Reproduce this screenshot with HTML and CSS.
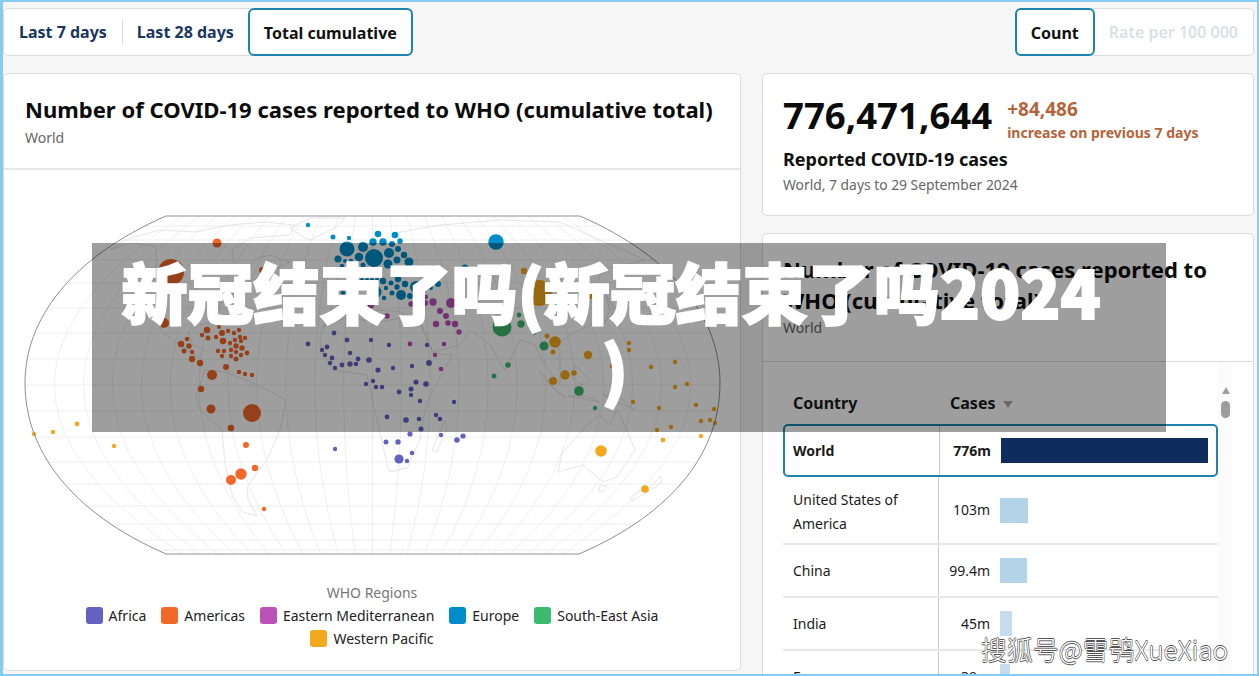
FILE: index.html
```html
<!DOCTYPE html>
<html lang="en">
<head>
<meta charset="utf-8">
<title>新冠结束了吗</title>
<link rel="stylesheet" href="styles.css">
</head>
<body>
<div class="frame">
  <div class="toolbar">
    <div class="seg">
      <span class="seg-item">Last 7 days</span>
      <span class="seg-sep"></span>
      <span class="seg-item">Last 28 days</span>
      <span class="seg-item active">Total cumulative</span>
    </div>
    <div class="seg">
      <span class="seg-item active">Count</span>
      <span class="seg-item disabled">Rate per 100 000</span>
    </div>
  </div>
  <div class="columns">
    <section class="card map-card">
      <header class="card-head">
        <h2>Number of COVID-19 cases reported to WHO (cumulative total)</h2>
        <p>World</p>
      </header>
      <svg class="map" viewBox="4 170 736 404" width="736" height="404">
        <defs><clipPath id="globe"><path d="M166,216 L580,216 C676,258 720,320 720,383 C720,450 676,512 579,554 L166,554 C70,512 25,450 25,383 C25,320 70,258 166,216Z"/></clipPath></defs>
        <g clip-path="url(#globe)" class="grid">
          <path d="M20,226H725M20,240H725M20,260H725M20,283H725M20,308H725M20,333H725M20,359H725M20,385H725M20,411H725M20,437H725M20,462H725M20,484H725M20,506H725M20,524H725M20,540H725M20,550H725"/>
          <path d="M372.5,216V554M389.75,216Q413.1,385 389.75,554M407,216Q453.7,385 407,554M424.25,216Q494.2,385 424.25,554M441.5,216Q534.8,385 441.5,554M458.75,216Q575.4,385 458.75,554M476,216Q616,385 476,554M493.25,216Q656.6,385 493.25,554M510.5,216Q697.1,385 510.5,554M527.75,216Q737.7,385 527.75,554M545,216Q778.3,385 545,554M562.25,216Q818.9,385 562.25,554"/>
          <path d="M355.25,216Q331.9,385 355.25,554M338,216Q291.3,385 338,554M320.75,216Q250.8,385 320.75,554M303.5,216Q210.2,385 303.5,554M286.25,216Q169.6,385 286.25,554M269,216Q129,385 269,554M251.75,216Q88.4,385 251.75,554M234.5,216Q47.9,385 234.5,554M217.25,216Q7.3,385 217.25,554M200,216Q-33.3,385 200,554M182.75,216Q-73.9,385 182.75,554"/>
        </g>
        <g class="land">
          <path d="M110,250L130,243L155,246L157,262L150,285L155,320L163,333L180,345L198,357L205,350L193,345L188,332L200,325L215,320L222,300L240,290L262,275L290,262L270,255L258,258L248,268L235,268L232,250L250,238L290,235L295,225L265,222L230,225L195,232L160,230L130,238Z"/>
          <path d="M290,228L310,218L345,218L335,228L310,240L300,235Z"/>
          <path d="M205,370L225,372L258,385L286,400L280,430L267,460L257,473L247,487L248,500L257,516L243,512L233,497L230,487L225,463L222,430L200,410L196,395Z"/>
          <path d="M323,327L320,340L322,352L333,370L367,375L372,398L380,433L388,468L390,472L407,468L420,440L423,420L428,400L452,355L433,353L420,323L400,318L380,322L345,318Z"/>
          <path d="M445,420L432,450L437,452L447,428Z"/>
          <path d="M335,300L345,290L335,282L345,265L375,245L400,232L440,225L500,220L560,222L600,240L645,260L610,268L600,275L590,300L600,320L570,335L556,345L560,350L560,385L545,365L535,345L520,340L505,370L490,345L470,330L460,345L433,352L420,322L400,312L380,310L345,315L323,327Z"/>
          <path d="M540,372L558,392L566,398L550,385ZM568,396L600,402L585,396ZM575,365L590,380L582,385L572,378ZM603,395L635,410L618,396Z"/>
          <path d="M606,295L616,310L603,325L610,310Z"/>
          <path d="M583,430L562,453L558,472L583,465L603,482L617,477L635,450L628,432L617,410L610,425L600,415L590,422Z"/>
          <path d="M600,485L607,486L603,492L599,491Z"/>
          <path d="M630,498L640,490L650,490L632,501ZM650,488L660,476L662,481L655,488Z"/>
        </g>
        <g class="dots wpr">
          <circle cx="524" cy="271" r="3.2"/><circle cx="539" cy="293" r="13"/><circle cx="590" cy="293" r="6"/><circle cx="547" cy="336" r="2.5"/><circle cx="555" cy="342" r="5.8"/><circle cx="553" cy="352" r="2.5"/><circle cx="588" cy="355" r="4.2"/><circle cx="565" cy="375" r="4.7"/><circle cx="574" cy="373" r="2.8"/><circle cx="553" cy="381" r="4"/><circle cx="629" cy="343" r="2.2"/><circle cx="629" cy="350" r="2.2"/><circle cx="612" cy="366" r="2.2"/><circle cx="651" cy="367" r="2.3"/><circle cx="675" cy="362" r="2.2"/><circle cx="687" cy="384" r="2.2"/><circle cx="675" cy="387" r="2.2"/><circle cx="633" cy="402" r="2.2"/><circle cx="659" cy="408" r="2.2"/><circle cx="696" cy="405" r="2.2"/><circle cx="714" cy="409" r="2.2"/><circle cx="701" cy="421" r="2.2"/><circle cx="710" cy="420" r="2.2"/><circle cx="715" cy="423" r="2.2"/><circle cx="657" cy="430" r="2.2"/><circle cx="671" cy="427" r="2.2"/><circle cx="701" cy="436" r="2.2"/><circle cx="663" cy="440" r="2.4"/><circle cx="601" cy="451" r="5.8"/><circle cx="645" cy="489" r="3.8"/><circle cx="77" cy="424" r="2.4"/><circle cx="53" cy="432" r="2.2"/><circle cx="34" cy="434" r="2.2"/><circle cx="114" cy="446" r="2.2"/>
        </g>
        <g class="dots sear">
          <circle cx="502" cy="327" r="9.5"/><circle cx="521" cy="324" r="3.7"/><circle cx="519" cy="315" r="2.4"/><circle cx="534" cy="332" r="2.7"/><circle cx="544" cy="346" r="4.5"/><circle cx="508" cy="365" r="2.8"/><circle cx="494" cy="376" r="2.5"/><circle cx="579" cy="391" r="4.8"/><circle cx="595" cy="408" r="2.2"/>
        </g>
        <g class="dots emro">
          <circle cx="433" cy="302" r="3.7"/><circle cx="451" cy="303" r="5"/><circle cx="425" cy="303" r="3"/><circle cx="411" cy="304" r="2.7"/><circle cx="426" cy="297" r="2.2"/><circle cx="440" cy="311" r="3"/><circle cx="446" cy="316" r="3"/><circle cx="436" cy="324" r="3.2"/><circle cx="448" cy="323" r="2.8"/><circle cx="455" cy="324" r="3.2"/><circle cx="459" cy="332" r="2.7"/><circle cx="387" cy="316" r="2.7"/><circle cx="410" cy="344" r="2.4"/><circle cx="444" cy="344" r="2.3"/><circle cx="435" cy="355" r="2.2"/><circle cx="441" cy="369" r="2.3"/><circle cx="479" cy="309" r="2.2"/><circle cx="371" cy="305" r="3.3"/><circle cx="340" cy="305" r="2.5"/>
        </g>
        <g class="dots euro">
          <circle cx="308" cy="225" r="2.2"/><circle cx="333" cy="237" r="2.5"/><circle cx="349" cy="238" r="2.2"/><circle cx="378" cy="234" r="3.3"/><circle cx="395" cy="235" r="3.3"/><circle cx="373" cy="242" r="3.7"/><circle cx="383" cy="242" r="3.7"/><circle cx="392" cy="244" r="3"/><circle cx="400" cy="241" r="2.7"/><circle cx="347" cy="249" r="7.5"/><circle cx="363" cy="247" r="5"/><circle cx="374" cy="258" r="9"/><circle cx="389" cy="253" r="5"/><circle cx="398" cy="249" r="3"/><circle cx="404" cy="255" r="3.2"/><circle cx="397" cy="260" r="3.5"/><circle cx="338" cy="259" r="3.5"/><circle cx="351" cy="261" r="2.2"/><circle cx="345" cy="261" r="2"/><circle cx="359" cy="257" r="4.3"/><circle cx="388" cy="264" r="4.5"/><circle cx="409" cy="262" r="4.5"/><circle cx="342" cy="266" r="2.2"/><circle cx="363" cy="265" r="2.5"/><circle cx="496" cy="242" r="7.7"/><circle cx="465" cy="268" r="3.5"/><circle cx="438" cy="284" r="3"/><circle cx="431" cy="288" r="2"/><circle cx="405" cy="272" r="3"/><circle cx="398" cy="279" r="3.2"/><circle cx="383" cy="281" r="3.2"/><circle cx="391" cy="283" r="2.5"/><circle cx="405" cy="284" r="3.2"/><circle cx="397" cy="287" r="2.7"/><circle cx="386" cy="288" r="2.2"/><circle cx="416" cy="287" r="6"/><circle cx="392" cy="293" r="2.5"/><circle cx="401" cy="295" r="5"/><circle cx="410" cy="296" r="3"/><circle cx="384" cy="298" r="2.2"/><circle cx="375" cy="292" r="6.5"/><circle cx="337" cy="285" r="5"/><circle cx="343" cy="293" r="2.3"/><circle cx="362" cy="280" r="2"/><circle cx="367" cy="280" r="2"/><circle cx="372" cy="280" r="2"/><circle cx="377" cy="280" r="2"/>
        </g>
        <g class="dots afro">
          <circle cx="334" cy="333" r="2.4"/><circle cx="347" cy="340" r="2.4"/><circle cx="371" cy="340" r="2.2"/><circle cx="389" cy="345" r="2.2"/><circle cx="308" cy="344" r="2.4"/><circle cx="327" cy="347" r="2.4"/><circle cx="322" cy="350" r="2.2"/><circle cx="325" cy="355" r="2.2"/><circle cx="332" cy="358" r="2.4"/><circle cx="350" cy="353" r="2.3"/><circle cx="358" cy="359" r="2.4"/><circle cx="330" cy="363" r="2.2"/><circle cx="335" cy="368" r="2.2"/><circle cx="342" cy="365" r="2.4"/><circle cx="350" cy="364" r="2.7"/><circle cx="356" cy="364" r="2.3"/><circle cx="369" cy="360" r="2.8"/><circle cx="378" cy="370" r="2.6"/><circle cx="393" cy="368" r="2.2"/><circle cx="412" cy="366" r="2.2"/><circle cx="427" cy="345" r="2.2"/><circle cx="429" cy="363" r="2.9"/><circle cx="416" cy="382" r="2.6"/><circle cx="426" cy="384" r="2.8"/><circle cx="373" cy="381" r="2.2"/><circle cx="366" cy="384" r="2.2"/><circle cx="376" cy="387" r="2.2"/><circle cx="382" cy="387" r="2.2"/><circle cx="399" cy="392" r="2.4"/><circle cx="411" cy="389" r="2.5"/><circle cx="411" cy="395" r="2.2"/><circle cx="420" cy="401" r="2.2"/><circle cx="454" cy="402" r="2.2"/><circle cx="387" cy="417" r="2.4"/><circle cx="406" cy="420" r="2.8"/><circle cx="419" cy="419" r="2.3"/><circle cx="436" cy="415" r="2.2"/><circle cx="440" cy="419" r="2.3"/><circle cx="421" cy="429" r="2.5"/><circle cx="410" cy="434" r="2.6"/><circle cx="441" cy="435" r="2.2"/><circle cx="463" cy="436" r="2.6"/><circle cx="457" cy="440" r="2.8"/><circle cx="386" cy="442" r="2.5"/><circle cx="398" cy="442" r="2.7"/><circle cx="335" cy="449" r="2.2"/><circle cx="399" cy="459" r="4.6"/><circle cx="412" cy="453" r="2.3"/><circle cx="407" cy="461" r="2.2"/>
        </g>
        <g class="dots amro">
          <circle cx="217" cy="243" r="4.5"/><circle cx="171" cy="272" r="13"/><circle cx="164" cy="323" r="5"/><circle cx="262" cy="270" r="3"/><circle cx="207" cy="330" r="3.3"/><circle cx="219" cy="327" r="2"/><circle cx="202" cy="335" r="2.2"/><circle cx="208" cy="338" r="2.5"/><circle cx="216" cy="337" r="2.2"/><circle cx="222" cy="333" r="3"/><circle cx="228" cy="331" r="2.2"/><circle cx="234" cy="333" r="2.2"/><circle cx="239" cy="330" r="2.2"/><circle cx="223" cy="341" r="3.3"/><circle cx="240" cy="337" r="2.2"/><circle cx="235" cy="340" r="2.2"/><circle cx="230" cy="343" r="2.2"/><circle cx="241" cy="341" r="2.2"/><circle cx="245" cy="338" r="2.2"/><circle cx="236" cy="346" r="2.7"/><circle cx="242" cy="348" r="2.7"/><circle cx="247" cy="353" r="2.4"/><circle cx="241" cy="355" r="2.2"/><circle cx="236" cy="352" r="2.2"/><circle cx="231" cy="350" r="2.2"/><circle cx="231" cy="356" r="2.2"/><circle cx="224" cy="351" r="2.2"/><circle cx="218" cy="351" r="2.2"/><circle cx="222" cy="356" r="2.2"/><circle cx="236" cy="359" r="2.5"/><circle cx="187" cy="339" r="2.3"/><circle cx="181" cy="344" r="3.2"/><circle cx="189" cy="346" r="2.7"/><circle cx="184" cy="351" r="2.5"/><circle cx="192" cy="352" r="2.2"/><circle cx="192" cy="359" r="3.2"/><circle cx="200" cy="363" r="3.2"/><circle cx="226" cy="367" r="3"/><circle cx="239" cy="372" r="2.3"/><circle cx="245" cy="374" r="2.2"/><circle cx="252" cy="375" r="2.2"/><circle cx="212" cy="375" r="5"/><circle cx="201" cy="389" r="3.2"/><circle cx="211" cy="409" r="4.5"/><circle cx="252" cy="413" r="9"/><circle cx="231" cy="428" r="3.3"/><circle cx="246" cy="445" r="3"/><circle cx="241" cy="474" r="5.7"/><circle cx="231" cy="480" r="5"/><circle cx="255" cy="468" r="3.2"/><circle cx="264" cy="509" r="2.2"/>
        </g>
        <path class="outline" d="M166,216 L580,216 C676,258 720,320 720,383 C720,450 676,512 579,554 L166,554 C70,512 25,450 25,383 C25,320 70,258 166,216Z"/>
      </svg>
      <div class="legend">
        <div class="legend-title">WHO Regions</div>
        <ul class="legend-items">
          <li><i class="swatch afro-bg"></i>Africa</li>
          <li><i class="swatch amro-bg"></i>Americas</li>
          <li><i class="swatch emro-bg"></i>Eastern Mediterranean</li>
          <li><i class="swatch euro-bg"></i>Europe</li>
          <li><i class="swatch sear-bg"></i>South-East Asia</li>
          <li><i class="swatch wpr-bg"></i>Western Pacific</li>
        </ul>
      </div>
    </section>
    <div class="side">
      <section class="card stat-card">
        <div class="stat-top">
          <div class="stat-num">776,471,644</div>
          <div class="stat-delta">
            <div class="delta-num">+84,486</div>
            <div class="delta-label">increase on previous 7 days</div>
          </div>
        </div>
        <div class="stat-name">Reported COVID-19 cases</div>
        <div class="stat-sub">World, 7 days to 29 September 2024</div>
      </section>
      <section class="card table-card">
        <header class="card-head side-head">
          <h2>Number of COVID-19 cases reported to WHO (cumulative total)</h2>
          <p>World</p>
        </header>
        <div class="table-wrap">
          <div class="table">
            <div class="thead">
              <div class="th-country">Country</div>
              <div class="th-cases">Cases <i class="sort"></i></div>
            </div>
            <div class="row selected">
              <div class="c-name">World</div><div class="c-val">776m</div>
              <div class="c-bar"><i class="bar dark" style="width:207px"></i></div>
            </div>
            <div class="row tall">
              <div class="c-name">United States of America</div><div class="c-val">103m</div>
              <div class="c-bar"><i class="bar" style="width:28px"></i></div>
            </div>
            <div class="row">
              <div class="c-name">China</div><div class="c-val">99.4m</div>
              <div class="c-bar"><i class="bar" style="width:27px"></i></div>
            </div>
            <div class="row">
              <div class="c-name">India</div><div class="c-val">45m</div>
              <div class="c-bar"><i class="bar pale" style="width:12px"></i></div>
            </div>
            <div class="row">
              <div class="c-name">France</div><div class="c-val">39m</div>
              <div class="c-bar"><i class="bar pale" style="width:10px"></i></div>
            </div>
          </div>
          <div class="scroll">
            <i class="scroll-up"></i>
            <i class="scroll-thumb"></i>
          </div>
        </div>
      </section>
    </div>
  </div>
  <div class="overlay">新冠结束了吗(新冠结束了吗2024 <span class="overlay-tail">)</span></div>
  <div class="watermark">搜狐号@雪鸮XueXiao</div>
</div>
</body>
</html>
```
FILE: styles.css
```css
* { box-sizing: border-box; }
html, body { margin: 0; padding: 0; }
body { font-family: "Noto Sans", "Open Sans", sans-serif; color: #111; background: #f6f6f7; }
.frame {
  position: relative;
  width: 1259px;
  height: 676px;
  overflow: hidden;
  background: #f6f6f7;
  border: solid #86cbf2;
  border-width: 2px 2px 2px 3px;
  padding: 6px 3px 0 0;
}
.toolbar { display: flex; justify-content: space-between; height: 48px; }
.seg {
  display: flex;
  align-items: center;
  height: 48px;
  background: #fff;
  border: 1px solid #dcdcdc;
  border-radius: 5px;
  font-size: 16px;
  font-weight: 700;
  color: #1a365f;
}
.seg-item { padding: 0 15px; line-height: 46px; white-space: nowrap; }
.seg-sep { width: 1px; height: 26px; background: #dcdcdc; margin-right: -1px; }
.seg-item.active {
  height: 48px;
  margin: -1px;
  padding: 0 14px;
  color: #111;
  background: #fff;
  border: 2px solid #1c85ad;
  border-radius: 6px;
}
.seg-item.disabled { color: #dcdfe6; font-weight: 600; padding: 0 15px; }
.columns { display: flex; gap: 21px; margin-top: 17px; }
.card { background: #fff; border: 1px solid #dcdcdc; border-radius: 5px; }
.map-card { width: 738px; height: 598px; flex: none; }
.card-head { height: 96px; padding: 20px 21px 0; border-bottom: 2px solid #e8e8e8; }
.card-head h2 { margin: 0; font-size: 22.06px; line-height: 30px; font-weight: 700; color: #0b0b0b; }
.card-head p { margin: 3px 0 0; font-size: 14px; line-height: 22px; color: #666; }
.map { display: block; }
.grid path { fill: none; stroke: #efefef; stroke-width: 1; }
.land path { fill: none; stroke: #dedede; stroke-width: .8; }
.outline { fill: none; stroke: #8f8f8f; stroke-width: 1; }
.wpr { fill: #f4a81d; }
.sear { fill: #3cba6f; }
.emro { fill: #bb50b8; }
.euro { fill: #008dc9; }
.afro { fill: #6461c0; }
.amro { fill: #f26829; }
.wpr-bg { background: #f4a81d; }
.sear-bg { background: #3cba6f; }
.emro-bg { background: #bb50b8; }
.euro-bg { background: #008dc9; }
.afro-bg { background: #6461c0; }
.amro-bg { background: #f26829; }
.legend { text-align: center; margin-top: 8px; }
.legend-title { font-size: 14px; line-height: 22px; color: #777; }
.legend-items { list-style: none; margin: 0 auto; padding: 0; width: 600px; display: flex; flex-wrap: wrap; justify-content: center; column-gap: 15px; font-size: 14px; color: #222; }
.legend-items li { display: flex; align-items: center; height: 23px; }
.swatch { width: 17px; height: 17px; border-radius: 3px; margin-right: 6px; }
.side { width: 492px; flex: none; display: flex; flex-direction: column; gap: 17px; }
.stat-card { height: 143px; padding: 16px 20px 0; }
.stat-top { display: flex; align-items: flex-start; gap: 15px; }
.stat-num { font-size: 36.6px; line-height: 50px; font-weight: 700; color: #0b0b0b; }
.stat-delta { color: #b5633a; font-weight: 700; padding-top: 6px; }
.delta-num { font-size: 19px; line-height: 26px; }
.delta-label { font-size: 14px; line-height: 22px; }
.stat-name { margin-top: 2px; font-size: 18px; line-height: 26px; font-weight: 700; color: #111; }
.stat-sub { margin-top: 2px; font-size: 13.85px; line-height: 22px; color: #666; }
.table-card { height: 500px; }
.side-head { height: 128px; padding: 20px 20px 0; border-bottom: 1px solid #dcdcdc; }
.side-head h2 { line-height: 31px; }
.side-head p { margin-top: 1px; }
.table-wrap { display: flex; padding-left: 20px; }
.table { width: 435px; flex: none; position: relative; }
.thead { display: flex; height: 63px; padding-top: 29px; font-size: 16px; font-weight: 700; color: #1a1a1a; line-height: 24px; }
.th-country { width: 157px; padding-left: 10px; }
.th-cases { padding-left: 10px; display: flex; align-items: center; gap: 8px; height: 24px; }
.sort { width: 0; height: 0; border: solid transparent; border-width: 7px 5.5px 0; border-top-color: #aaa; margin-top: 3px; }
.row { display: flex; align-items: center; height: 53px; border-bottom: 2px solid #e8e8e8; font-size: 14px; line-height: 24px; color: #1a1a1a; }
.row.tall { height: 68px; }
.row.tall .c-name { padding-top: 3px; }
.row.selected { height: 53px; border: 2px solid #1c85ad; border-radius: 5px; font-weight: 700; margin-top: -1px; }
.c-name { width: 156px; height: 100%; flex: none; padding: 0 10px; display: flex; align-items: center; border-right: 1px solid #c9c9c9; }
.selected .c-name { width: 155px; padding-left: 8px; }
.c-val { width: 51px; flex: none; text-align: right; }
.c-bar { padding-left: 10px; display: flex; }
.bar { display: block; height: 25px; background: #b3d3e8; }
.bar.dark { background: #0f2d5c; }
.bar.pale { background: #c6dcee; }
.scroll { width: 15px; flex: none; background: #fbfbfb; padding-top: 25px; display: flex; flex-direction: column; align-items: center; gap: 7px; }
.scroll-up { width: 0; height: 0; border: solid transparent; border-width: 0 4.5px 7px; border-bottom-color: #a0a0a0; }
.scroll-thumb { width: 9px; height: 17px; border-radius: 5px; background: #9c9c9c; }
.overlay {
  position: absolute;
  left: 89px;
  top: 241px;
  width: 1074px;
  height: 189px;
  padding: 9px 58px 0 22px;
  background: rgba(0, 0, 0, .38);
  color: #fff;
  font-family: "Noto Sans CJK SC", "Noto Sans", sans-serif;
  font-weight: 900;
  font-size: 66px;
  line-height: 76px;
  text-align: center;
  -webkit-text-stroke: 2px #fff;
}
.overlay-tail { display: inline-block; margin-left: 8px; }
.watermark {
  position: absolute;
  right: 29px;
  top: 632px;
  font-family: "Noto Sans CJK SC", sans-serif;
  font-weight: 300;
  font-size: 26px;
  line-height: 30px;
  color: #fff;
  text-shadow: .6px 0 0 #555, -.6px 0 0 #555, 0 .6px 0 #555, 0 -.6px 0 #555;
}
```
